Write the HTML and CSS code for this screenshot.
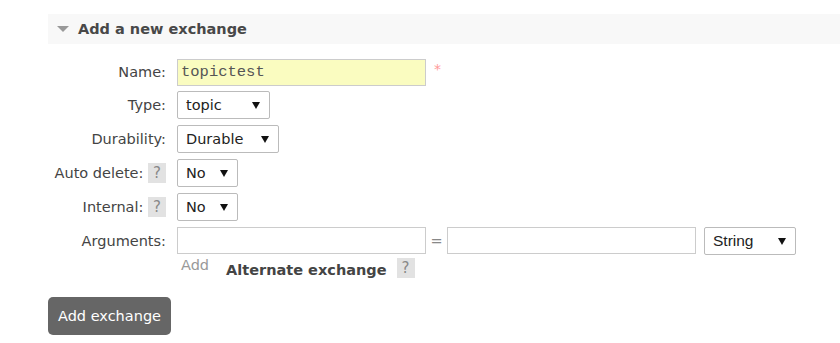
FILE: index.html
```html
<!DOCTYPE html>
<html lang="en">
  <head>
    <meta charset="UTF-8" />
    <meta name="viewport" content="width=device-width, initial-scale=1.0" />
    <title>Add a new exchange</title>
    <link rel="stylesheet" href="styles.css">
  </head>

  <body>
    <div class="section">
      <h2 class="section-header"><span class="toggle"></span>Add a new exchange</h2>

      <form class="exchange-form" action="" method="GET">
        <div class="form-row name-row">
          <label class="row-label" for="name">Name:</label>
          <div class="row-field">
            <input class="text-input name-input" type="text" id="name" value="topictest" />
            <span class="required">*</span>
          </div>
        </div>
        <div class="form-row">
          <label class="row-label" for="type">Type:</label>
          <div class="row-field">
            <span class="select-wrap type-select">
              <select id="type"><option>topic</option></select>
            </span>
          </div>
        </div>
        <div class="form-row">
          <label class="row-label" for="durable">Durability:</label>
          <div class="row-field">
            <span class="select-wrap durable-select">
              <select id="durable"><option>Durable</option></select>
            </span>
          </div>
        </div>
        <div class="form-row">
          <label class="row-label" for="auto_delete">Auto delete: <span class="help">?</span></label>
          <div class="row-field">
            <span class="select-wrap yesno-select">
              <select id="auto_delete"><option>No</option></select>
            </span>
          </div>
        </div>
        <div class="form-row">
          <label class="row-label" for="internal">Internal: <span class="help">?</span></label>
          <div class="row-field">
            <span class="select-wrap yesno-select">
              <select id="internal"><option>No</option></select>
            </span>
          </div>
        </div>
        <div class="form-row args-row">
          <label class="row-label" for="arg_key">Arguments:</label>
          <div class="row-field">
            <input class="text-input" type="text" id="arg_key" />
            <span class="equals">=</span>
            <input class="text-input" type="text" id="arg_value" />
            <span class="select-wrap string-select">
              <select id="arg_type"><option>String</option></select>
            </span>
          </div>
        </div>
        <div class="form-row extra-row">
          <span class="row-label"></span>
          <div class="row-field">
            <span class="add-link">Add</span>
            <span class="alt-label">Alternate exchange</span>
            <span class="help">?</span>
          </div>
        </div>

        <button class="submit-button" type="submit">Add exchange</button>
      </form>
    </div>
  </body>
</html>
```

FILE: styles.css
```css
:root {
  box-sizing: border-box;
  --text: #444;
  --border: 1px solid #ccc;
}
body {
  margin: 0;
  background: white;
  color: var(--text);
  font-family: "DejaVu Sans", Verdana, sans-serif;
  font-size: 14.5px;
}
.section {
  padding-left: 48px;
  padding-top: 14px;
}
.section-header {
  display: flex;
  align-items: center;
  height: 30px;
  margin: 0;
  padding-left: 9px;
  background: #f8f8f8;
  font-size: 14.5px;
  font-weight: bold;
  color: #484848;
}
.toggle {
  width: 0;
  height: 0;
  margin-right: 9px;
  border-left: 6px solid transparent;
  border-right: 6px solid transparent;
  border-top: 6px solid #999;
}

.exchange-form {
  display: flex;
  flex-direction: column;
  padding-top: 12px;
}
.form-row {
  display: flex;
  align-items: center;
  min-height: 34px;
}
.name-row {
  min-height: 32px;
}
.row-label {
  width: 118px;
  margin-right: 11px;
  text-align: right;
  white-space: nowrap;
}
.row-field {
  display: flex;
  align-items: center;
}

.text-input {
  box-sizing: border-box;
  width: 249px;
  height: 27px;
  margin: 0;
  padding: 2px 3px;
  border: var(--border);
  font-family: "Liberation Mono", monospace;
  font-size: 15.5px;
  color: #555;
  background: white;
}
.name-input {
  background: #fafcc0;
}
.required {
  margin-left: 8px;
  margin-top: -6px;
  color: #f99;
  font-size: 14px;
}
.equals {
  width: 21px;
  text-align: center;
  color: #888;
}

.select-wrap {
  position: relative;
  display: inline-block;
}
.select-wrap::after {
  content: '';
  position: absolute;
  right: 10px;
  top: 11px;
  border-left: 4px solid transparent;
  border-right: 4px solid transparent;
  border-top: 7px solid #111;
  pointer-events: none;
}
.select-wrap select {
  appearance: none;
  box-sizing: border-box;
  height: 28px;
  margin: 0;
  padding: 0 8px;
  border: 1px solid #bbb;
  border-radius: 2px;
  background: white;
  color: #222;
  font-family: "DejaVu Sans", Verdana, sans-serif;
  font-size: 14.5px;
}
.type-select select {
  width: 93px;
}
.durable-select select {
  width: 102px;
}
.yesno-select select {
  width: 61px;
}
.string-select {
  margin-left: 8px;
}
.string-select select {
  width: 92px;
  font-family: "Liberation Sans", Arial, sans-serif;
  font-size: 15.5px;
}

.help {
  display: inline-block;
  width: 18px;
  height: 20px;
  line-height: 20px;
  text-align: center;
  background: #e2e2e2;
  color: #888;
  font-size: 15px;
}

.args-row {
  min-height: 33px;
}
.extra-row {
  align-items: flex-start;
  min-height: 30px;
}
.extra-row .row-field {
  padding-left: 4px;
  align-items: flex-end;
}
.add-link {
  color: #999;
  margin-right: 17px;
  margin-bottom: 5px;
}
.alt-label {
  font-weight: bold;
  font-size: 14.5px;
  margin-right: 10px;
}

.submit-button {
  align-self: flex-start;
  margin-top: 10px;
  width: 123px;
  height: 38px;
  border: none;
  border-radius: 5px;
  background: #666;
  color: white;
  font-family: "DejaVu Sans", Verdana, sans-serif;
  font-size: 14.5px;
}
```
